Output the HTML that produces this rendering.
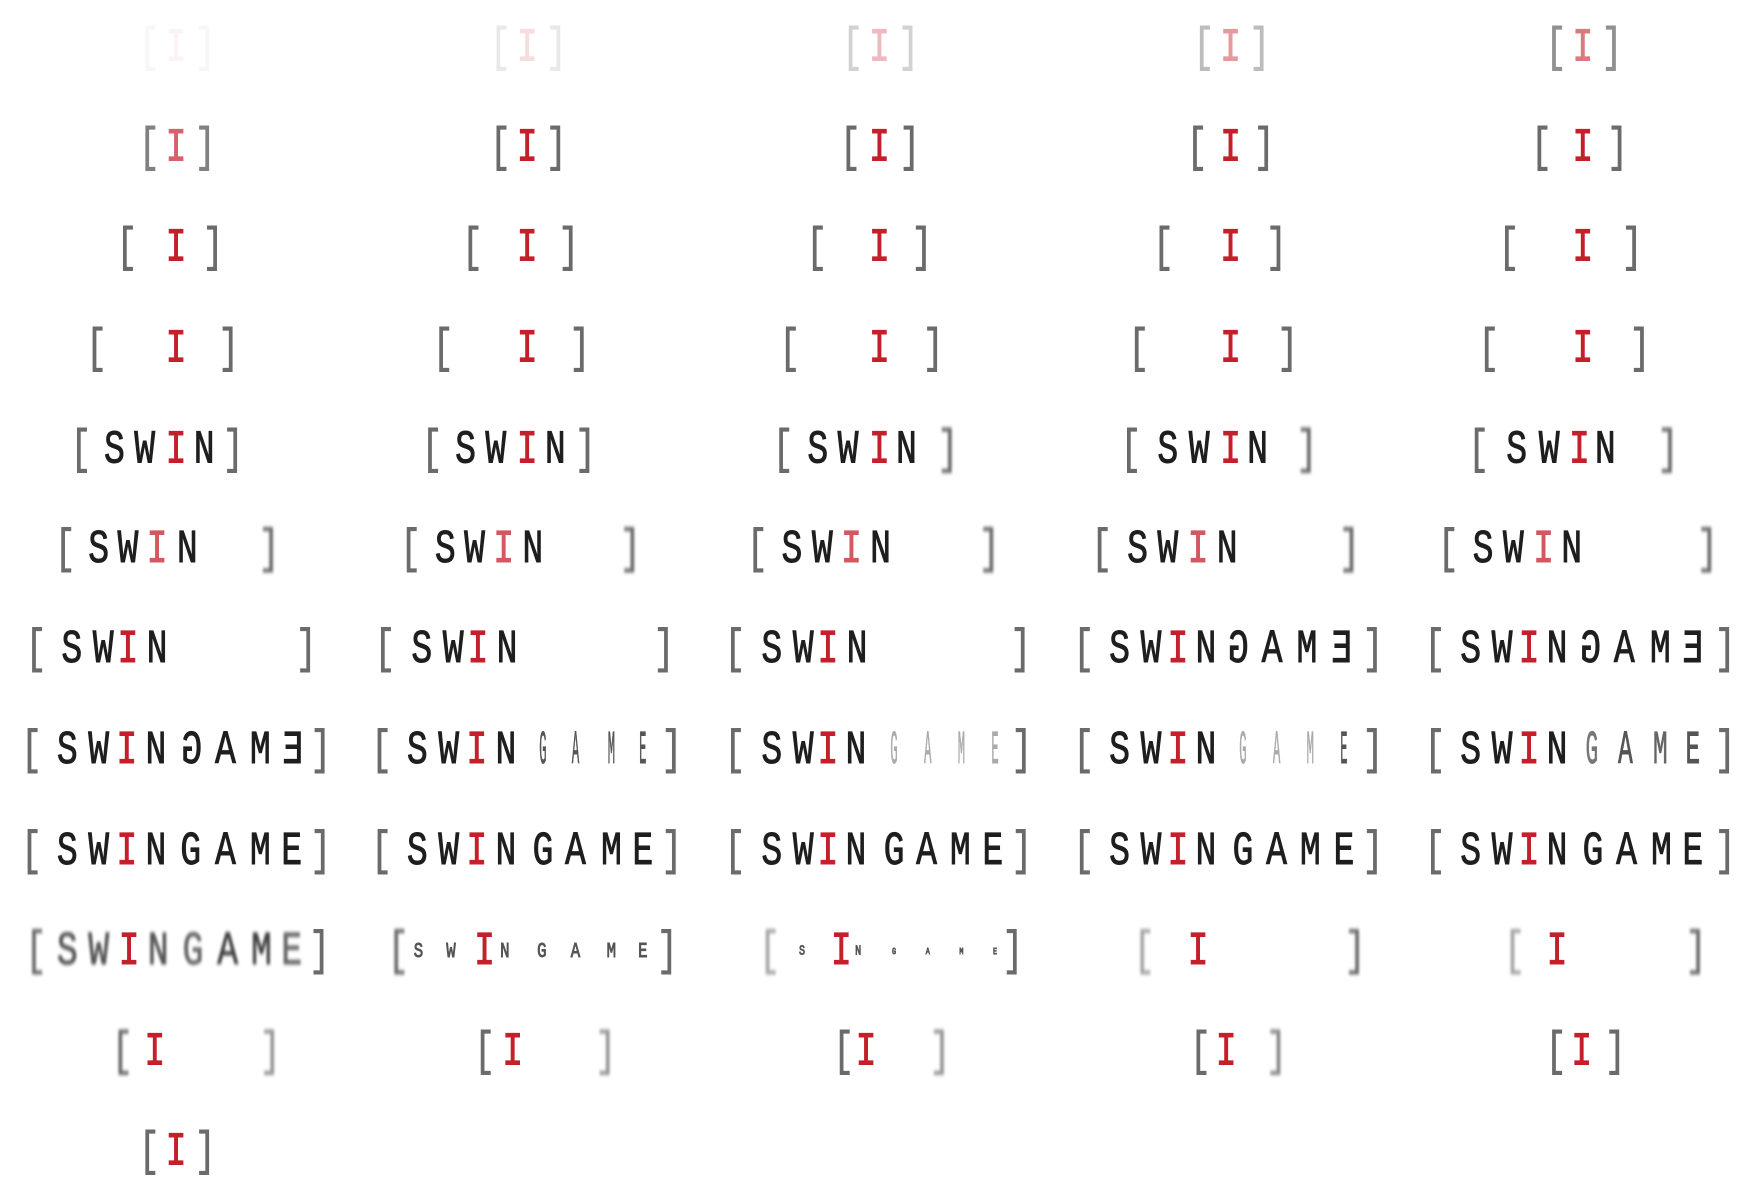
<!DOCTYPE html>
<html><head><meta charset="utf-8">
<style>
html,body{margin:0;padding:0;background:#fff;width:1750px;height:1200px;overflow:hidden}
#w{position:absolute;left:0;top:0;width:1560px;height:1070px;transform:scale(1.1218);transform-origin:0 0}
.r{position:absolute;left:0;width:1560px;height:0}
.r b{position:absolute;top:0;font:normal 31px "Liberation Mono",monospace;-webkit-text-stroke:.6px currentColor;line-height:1;transform:translate(-50%,-50%) scaleY(1.35);color:#1e1e1e}
.r b.k{color:#6b6b6b}
.r b.i{color:#c4202c}
.r b.m{transform:translate(-50%,-50%) scaleY(1.35) scaleX(-1)}
.r b.l{color:#999}
.r b.n{transform:translate(-50%,-50%) scaleY(1.35) scaleX(.35);color:#aaa}
.r b.s{font-size:14px;color:#555}
.r b.bl{filter:blur(1.2px)}
</style></head><body><div id="w">

<div class="r" style="top:44px">
<b class="k" style="left:133px;opacity:.05">[</b><b class="i" style="left:157px;opacity:.05">I</b><b class="k" style="left:183px;opacity:.05">]</b>
<b class="k" style="left:446px;opacity:.15">[</b><b class="i" style="left:470px;opacity:.15">I</b><b class="k" style="left:496px;opacity:.15">]</b>
<b class="k" style="left:760px;opacity:.3">[</b><b class="i" style="left:784px;opacity:.3">I</b><b class="k" style="left:810px;opacity:.3">]</b>
<b class="k" style="left:1073px;opacity:.45">[</b><b class="i" style="left:1097px;opacity:.45">I</b><b class="k" style="left:1123px;opacity:.45">]</b>
<b class="k" style="left:1387px;opacity:.75">[</b><b class="i" style="left:1411px;opacity:.6">I</b><b class="k" style="left:1437px;opacity:.75">]</b>
</div>

<div class="r" style="top:133px">
<b class="k" style="left:133px;opacity:.85">[</b><b class="i" style="left:157px;opacity:.7">I</b><b class="k" style="left:183px;opacity:.85">]</b>
<b class="k" style="left:446px">[</b><b class="i" style="left:470px">I</b><b class="k" style="left:496px">]</b>
<b class="k" style="left:758px">[</b><b class="i" style="left:784px">I</b><b class="k" style="left:811px">]</b>
<b class="k" style="left:1067px">[</b><b class="i" style="left:1097px">I</b><b class="k" style="left:1127px">]</b>
<b class="k" style="left:1374px">[</b><b class="i" style="left:1411px">I</b><b class="k" style="left:1442px">]</b>
</div>

<div class="r" style="top:222px">
<b class="k" style="left:113px">[</b><b class="i" style="left:157px">I</b><b class="k" style="left:190px">]</b>
<b class="k" style="left:421px">[</b><b class="i" style="left:470px">I</b><b class="k" style="left:507px">]</b>
<b class="k" style="left:728px">[</b><b class="i" style="left:784px">I</b><b class="k" style="left:822px">]</b>
<b class="k" style="left:1037px">[</b><b class="i" style="left:1097px">I</b><b class="k" style="left:1138px">]</b>
<b class="k" style="left:1345px">[</b><b class="i" style="left:1411px">I</b><b class="k" style="left:1455px">]</b>
</div>

<div class="r" style="top:312px">
<b class="k" style="left:86px">[</b><b class="i" style="left:157px">I</b><b class="k" style="left:204px">]</b>
<b class="k" style="left:395px">[</b><b class="i" style="left:470px">I</b><b class="k" style="left:517px">]</b>
<b class="k" style="left:704px">[</b><b class="i" style="left:784px">I</b><b class="k" style="left:832px">]</b>
<b class="k" style="left:1015px">[</b><b class="i" style="left:1097px">I</b><b class="k" style="left:1148px">]</b>
<b class="k" style="left:1327px">[</b><b class="i" style="left:1411px">I</b><b class="k" style="left:1462px">]</b>
</div>

<div class="r" style="top:402px">
<b class="k" style="left:72px">[</b><b style="left:102px">S</b><b style="left:129px">W</b><b class="i" style="left:157px">I</b><b style="left:182px">N</b><b class="k" style="left:208px">]</b>
<b class="k" style="left:385px">[</b><b style="left:415px">S</b><b style="left:442px">W</b><b class="i" style="left:470px">I</b><b style="left:495px">N</b><b class="k" style="left:522px">]</b>
<b class="k" style="left:698px">[</b><b style="left:729px">S</b><b style="left:756px">W</b><b class="i" style="left:784px">I</b><b style="left:808px">N</b><b class="k bl" style="left:845px">]</b>
<b class="k" style="left:1008px">[</b><b style="left:1041px">S</b><b style="left:1069px">W</b><b class="i" style="left:1097px">I</b><b style="left:1121px">N</b><b class="k bl" style="left:1165px">]</b>
<b class="k" style="left:1318px">[</b><b style="left:1352px">S</b><b style="left:1381px">W</b><b class="i" style="left:1408px">I</b><b style="left:1431px">N</b><b class="k bl" style="left:1487px">]</b>
</div>

<div class="r" style="top:491px">
<b class="k" style="left:58px">[</b><b style="left:88px">S</b><b style="left:114px">W</b><b class="i" style="left:140px;opacity:.75">I</b><b style="left:167px">N</b><b class="k bl" style="left:240px">]</b>
<b class="k" style="left:366px">[</b><b style="left:397px">S</b><b style="left:423px">W</b><b class="i" style="left:449px;opacity:.75">I</b><b style="left:475px">N</b><b class="k bl" style="left:562px">]</b>
<b class="k" style="left:675px">[</b><b style="left:706px">S</b><b style="left:733px">W</b><b class="i" style="left:759px;opacity:.75">I</b><b style="left:785px">N</b><b class="k bl" style="left:882px">]</b>
<b class="k" style="left:982px">[</b><b style="left:1014px">S</b><b style="left:1041px">W</b><b class="i" style="left:1068px;opacity:.75">I</b><b style="left:1094px">N</b><b class="k bl" style="left:1203px">]</b>
<b class="k" style="left:1291px">[</b><b style="left:1322px">S</b><b style="left:1349px">W</b><b class="i" style="left:1376px;opacity:.75">I</b><b style="left:1401px">N</b><b class="k bl" style="left:1522px">]</b>
</div>

<div class="r" style="top:580px">
<b class="k" style="left:32px">[</b><b style="left:64px">S</b><b style="left:92px">W</b><b class="i" style="left:114px">I</b><b style="left:140px">N</b><b class="k" style="left:273px">]</b>
<b class="k" style="left:343px">[</b><b style="left:376px">S</b><b style="left:404px">W</b><b class="i" style="left:426px">I</b><b style="left:452px">N</b><b class="k" style="left:592px">]</b>
<b class="k" style="left:655px">[</b><b style="left:688px">S</b><b style="left:716px">W</b><b class="i" style="left:738px">I</b><b style="left:764px">N</b><b class="k" style="left:910px">]</b>
<b class="k" style="left:966px">[</b><b style="left:998px">S</b><b style="left:1026px">W</b><b class="i" style="left:1050px">I</b><b style="left:1075px">N</b><b class="m" style="left:1104px">G</b><b style="left:1134px">A</b><b style="left:1165px">M</b><b class="m" style="left:1196px">E</b><b class="k" style="left:1224px">]</b>
<b class="k" style="left:1279px">[</b><b style="left:1311px">S</b><b style="left:1339px">W</b><b class="i" style="left:1363px">I</b><b style="left:1388px">N</b><b class="m" style="left:1418px">G</b><b style="left:1448px">A</b><b style="left:1480px">M</b><b class="m" style="left:1509px">E</b><b class="k" style="left:1538px">]</b>
</div>

<div class="r" style="top:670px">
<b class="k" style="left:28px">[</b><b style="left:60px">S</b><b style="left:88px">W</b><b class="i" style="left:113px">I</b><b style="left:139px">N</b><b class="m" style="left:171px">G</b><b style="left:201px">A</b><b style="left:232px">M</b><b class="m" style="left:261px">E</b><b class="k" style="left:286px">]</b>
<b class="k" style="left:340px">[</b><b style="left:372px">S</b><b style="left:400px">W</b><b class="i" style="left:425px">I</b><b style="left:451px">N</b><b class="m n" style="left:484px;color:#555">G</b><b class="n" style="left:513px;color:#555">A</b><b class="n" style="left:545px;color:#555">M</b><b class="m n" style="left:573px;color:#555">E</b><b class="k" style="left:599px">]</b>
<b class="k" style="left:655px">[</b><b style="left:688px">S</b><b style="left:716px">W</b><b class="i" style="left:738px">I</b><b style="left:763px">N</b><b class="n" style="left:797px">G</b><b class="n" style="left:827px">A</b><b class="n" style="left:857px">M</b><b class="n" style="left:887px">E</b><b class="k" style="left:911px">]</b>
<b class="k" style="left:966px">[</b><b style="left:998px">S</b><b style="left:1026px">W</b><b class="i" style="left:1050px">I</b><b style="left:1075px">N</b><b class="n" style="left:1108px">G</b><b class="n" style="left:1138px">A</b><b class="n" style="left:1168px">M</b><b class="n" style="left:1198px;color:#555">E</b><b class="k" style="left:1224px">]</b>
<b class="k" style="left:1279px">[</b><b style="left:1311px">S</b><b style="left:1339px">W</b><b class="i" style="left:1363px">I</b><b style="left:1388px">N</b><b class="n" style="left:1419px;color:#777;transform:translate(-50%,-50%) scaleY(1.35) scaleX(.6)">G</b><b class="n" style="left:1449px;color:#555;transform:translate(-50%,-50%) scaleY(1.35) scaleX(.7)">A</b><b class="n" style="left:1480px;color:#666;transform:translate(-50%,-50%) scaleY(1.35) scaleX(.7)">M</b><b class="n" style="left:1509px;color:#555;transform:translate(-50%,-50%) scaleY(1.35) scaleX(.7)">E</b><b class="k" style="left:1538px">]</b>
</div>

<div class="r" style="top:760px">
<b class="k" style="left:28px">[</b><b style="left:60px">S</b><b style="left:88px">W</b><b class="i" style="left:113px">I</b><b style="left:139px">N</b><b style="left:170px">G</b><b style="left:201px">A</b><b style="left:232px">M</b><b style="left:260px">E</b><b class="k" style="left:286px">]</b>
<b class="k" style="left:340px">[</b><b style="left:372px">S</b><b style="left:400px">W</b><b class="i" style="left:425px">I</b><b style="left:451px">N</b><b style="left:484px">G</b><b style="left:513px">A</b><b style="left:545px">M</b><b style="left:573px">E</b><b class="k" style="left:599px">]</b>
<b class="k" style="left:655px">[</b><b style="left:688px">S</b><b style="left:716px">W</b><b class="i" style="left:738px">I</b><b style="left:763px">N</b><b style="left:797px">G</b><b style="left:826px">A</b><b style="left:856px">M</b><b style="left:885px">E</b><b class="k" style="left:911px">]</b>
<b class="k" style="left:966px">[</b><b style="left:998px">S</b><b style="left:1026px">W</b><b class="i" style="left:1050px">I</b><b style="left:1075px">N</b><b style="left:1108px">G</b><b style="left:1138px">A</b><b style="left:1168px">M</b><b style="left:1198px">E</b><b class="k" style="left:1224px">]</b>
<b class="k" style="left:1279px">[</b><b style="left:1311px">S</b><b style="left:1339px">W</b><b class="i" style="left:1363px">I</b><b style="left:1388px">N</b><b style="left:1420px">G</b><b style="left:1450px">A</b><b style="left:1481px">M</b><b style="left:1509px">E</b><b class="k" style="left:1538px">]</b>
</div>

<div class="r" style="top:849px">
<b class="k bl" style="left:32px">[</b><b class="bl" style="left:60px;color:#555">S</b><b class="bl" style="left:88px;color:#555">W</b><b class="i" style="left:115px">I</b><b class="bl" style="left:141px;color:#555">N</b><b class="bl" style="left:172px;color:#666">G</b><b class="bl" style="left:203px;color:#444">A</b><b class="bl" style="left:233px;color:#444">M</b><b class="bl" style="left:260px;color:#666">E</b><b class="k" style="left:285px">]</b>
<b class="k bl" style="left:355px">[</b><b class="s" style="left:373px">S</b><b class="s" style="left:402px">W</b><b class="i" style="left:432px">I</b><b class="s" style="left:450px">N</b><b class="s" style="left:483px">G</b><b class="s" style="left:513px">A</b><b class="s" style="left:545px">M</b><b class="s" style="left:573px">E</b><b class="k" style="left:595px">]</b>
<b class="k bl" style="left:686px;opacity:.6">[</b><b class="s" style="left:715px;font-size:9px">S</b><b class="i" style="left:750px">I</b><b class="s" style="left:765px;font-size:9px">N</b><b class="s" style="left:797px;font-size:6px">G</b><b class="s" style="left:827px;font-size:6px">A</b><b class="s" style="left:857px;font-size:6px">M</b><b class="s" style="left:887px;font-size:6px">E</b><b class="k" style="left:903px">]</b>
<b class="k bl" style="left:1020px;opacity:.6">[</b><b class="i" style="left:1068px">I</b><b class="k bl" style="left:1208px">]</b>
<b class="k bl" style="left:1350px;opacity:.6">[</b><b class="i" style="left:1388px">I</b><b class="k bl" style="left:1512px">]</b>
</div>

<div class="r" style="top:939px">
<b class="k bl" style="left:109px">[</b><b class="i" style="left:138px">I</b><b class="k bl" style="left:241px;opacity:.7">]</b>
<b class="k" style="left:432px">[</b><b class="i" style="left:457px">I</b><b class="k bl" style="left:540px;opacity:.7">]</b>
<b class="k" style="left:752px">[</b><b class="i" style="left:772px">I</b><b class="k bl" style="left:838px;opacity:.7">]</b>
<b class="k" style="left:1070px">[</b><b class="i" style="left:1093px">I</b><b class="k bl" style="left:1138px;opacity:.8">]</b>
<b class="k" style="left:1387px">[</b><b class="i" style="left:1410px">I</b><b class="k" style="left:1440px">]</b>
</div>

<div class="r" style="top:1028px">
<b class="k" style="left:133px">[</b><b class="i" style="left:157px">I</b><b class="k" style="left:183px">]</b>
</div>

</div></body></html>
